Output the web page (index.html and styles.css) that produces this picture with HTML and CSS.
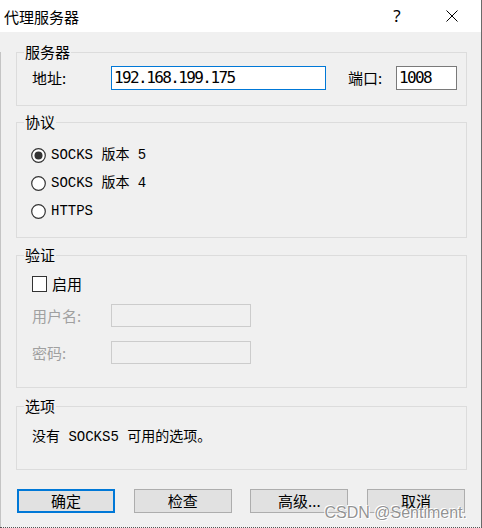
FILE: index.html
```html
<!DOCTYPE html>
<html lang="zh-CN">
<head>
<meta charset="utf-8">
<title>代理服务器</title>
<link rel="stylesheet" href="styles.css">
</head>
<body>
<div class="window">
  <div class="titlebar">
    <span class="title">代理服务器</span>
    <span class="help">?</span>
    <svg class="close" width="12" height="12" viewBox="0 0 12 12"><path d="M0.5 0.5 L11.5 11.5 M11.5 0.5 L0.5 11.5" stroke="#000" stroke-width="1" fill="none"/></svg>
  </div>
  <div class="content">
    <div class="group g-server">
      <span class="legend">服务器</span>
      <div class="row">
        <span class="lbl addr-lbl">地址:</span>
        <div class="input focus addr">192.168.199.175</div>
        <span class="lbl port-lbl">端口:</span>
        <div class="input port">1008</div>
      </div>
    </div>

    <div class="group g-proto">
      <span class="legend">协议</span>
      <div class="radio-row">
        <svg class="radio" width="15" height="15" viewBox="0 0 15 15"><circle cx="7.5" cy="7.5" r="6.8" fill="#fff" stroke="#333" stroke-width="1.2"/><circle cx="7.5" cy="7.5" r="4" fill="#333"/></svg>
        <span class="mixed">SOCKS 版本 5</span>
      </div>
      <div class="radio-row">
        <svg class="radio" width="15" height="15" viewBox="0 0 15 15"><circle cx="7.5" cy="7.5" r="6.8" fill="#fff" stroke="#333" stroke-width="1.2"/></svg>
        <span class="mixed">SOCKS 版本 4</span>
      </div>
      <div class="radio-row">
        <svg class="radio" width="15" height="15" viewBox="0 0 15 15"><circle cx="7.5" cy="7.5" r="6.8" fill="#fff" stroke="#333" stroke-width="1.2"/></svg>
        <span class="mixed">HTTPS</span>
      </div>
    </div>

    <div class="group g-auth">
      <span class="legend">验证</span>
      <div class="check-row">
        <span class="checkbox"></span>
        <span class="cjk">启用</span>
      </div>
      <div class="field-row first">
        <span class="lbl dis">用户名:</span>
        <div class="input disabled"></div>
      </div>
      <div class="field-row second">
        <span class="lbl dis">密码:</span>
        <div class="input disabled"></div>
      </div>
    </div>

    <div class="group g-opts">
      <span class="legend">选项</span>
      <div class="opts-text mixed">没有 SOCKS5 可用的选项。</div>
    </div>

    <div class="buttons">
      <div class="btn default">确定</div>
      <div class="btn">检查</div>
      <div class="btn">高级...</div>
      <div class="btn">取消</div>
    </div>
  </div>
  <div class="watermark">CSDN @Sentiment.</div>
</div>
</body>
</html>
```

FILE: styles.css
```css
* { box-sizing: border-box; }

html, body {
  margin: 0;
  padding: 0;
  background: #f0f0f0;
}

.window {
  position: relative;
  width: 482px;
  height: 528px;
  background: #f0f0f0;
  border-right: 1px solid #6a6a6a;
  border-bottom: 1px dotted #555;
  overflow: hidden;
  font-family: "Noto Sans CJK SC", "Noto Sans", sans-serif;
  color: #000;
}

.titlebar {
  height: 32px;
  background: #fff;
  display: flex;
  align-items: center;
  padding-left: 4px;
}

.title {
  flex: 1;
  font-size: 15px;
  line-height: 18px;
  margin-top: 1px;
}

.help {
  width: 16px;
  text-align: center;
  font-family: "Noto Sans", sans-serif;
  font-size: 17px;
  line-height: 18px;
  margin-right: 41px;
}

.close {
  display: block;
  margin-right: 23px;
}

.content {
  padding: 0 14px 0 15px;
  border-left: 1px solid #c4c4c4;
  height: 496px;
}

.group {
  position: relative;
  border: 1px solid #dcdcdc;
}

.legend {
  position: absolute;
  top: -9px;
  left: 7px;
  padding: 0 1px;
  background: #f0f0f0;
  font-size: 15px;
  line-height: 16px;
}

.g-server { margin-top: 20px; height: 54px; padding: 13px 0 0 15px; }
.g-proto  { margin-top: 16px; height: 116px; padding: 18px 0 0 14px; }
.g-auth   { margin-top: 17px; height: 133px; padding: 14px 0 0 14px; }
.g-opts   { margin-top: 18px; height: 64px; padding: 22px 0 0 15px; }

.row {
  display: flex;
  align-items: center;
  height: 24px;
}

.lbl {
  font-size: 15px;
  line-height: 16px;
}

.addr-lbl { width: 79px; }
.port-lbl { width: 48px; margin-left: 22px; }

.input {
  height: 24px;
  background: #fff;
  border: 1px solid #7a7a7a;
  padding-left: 2px;
  font-family: "DejaVu Sans Mono", "Liberation Mono", monospace;
  font-size: 16px;
  letter-spacing: -1.6px;
  line-height: 22px;
}

.input.focus { border-color: #0078d7; }
.addr { width: 215px; }
.port { width: 61px; }

.radio-row {
  display: flex;
  align-items: center;
  height: 28px;
}

.radio {
  display: block;
  margin-right: 5px;
}

.mixed {
  font-family: "Liberation Mono", "Noto Sans CJK SC", monospace;
  font-size: 14px;
  line-height: 16px;
}

.check-row {
  display: flex;
  align-items: center;
  height: 28px;
}

.checkbox {
  width: 15px;
  height: 16px;
  border: 1px solid #333;
  background: #fff;
  margin: 0 5px 0 1px;
}

.cjk {
  font-size: 15px;
  line-height: 16px;
}

.field-row {
  display: flex;
  align-items: center;
  height: 23px;
  padding-left: 1px;
}

.field-row.first { margin-top: 6px; }
.field-row.second { margin-top: 14px; }

.lbl.dis {
  width: 79px;
  color: #a0a0a0;
}

.input.disabled {
  width: 140px;
  height: 23px;
  background: #f0f0f0;
  border-color: #cccccc;
}

.opts-text {
  line-height: 16px;
}

.buttons {
  margin-top: 19px;
  display: flex;
  justify-content: space-between;
  padding: 0 2px 0 1px;
}

.btn {
  width: 98px;
  height: 24px;
  background: #e1e1e1;
  border: 1px solid #adadad;
  font-size: 15px;
  line-height: 22px;
  text-align: center;
}

.btn.default {
  border: 2px solid #0078d7;
  line-height: 20px;
}

.watermark {
  position: absolute;
  right: 14px;
  bottom: 5px;
  font-family: "Liberation Sans", Arial, sans-serif;
  font-size: 16px;
  line-height: 18px;
  color: rgba(110, 110, 110, 0.75);
  text-shadow: 0 0 1px #fff, 1px 1px 0 #fff, -1px -1px 0 #fff;
}
```
